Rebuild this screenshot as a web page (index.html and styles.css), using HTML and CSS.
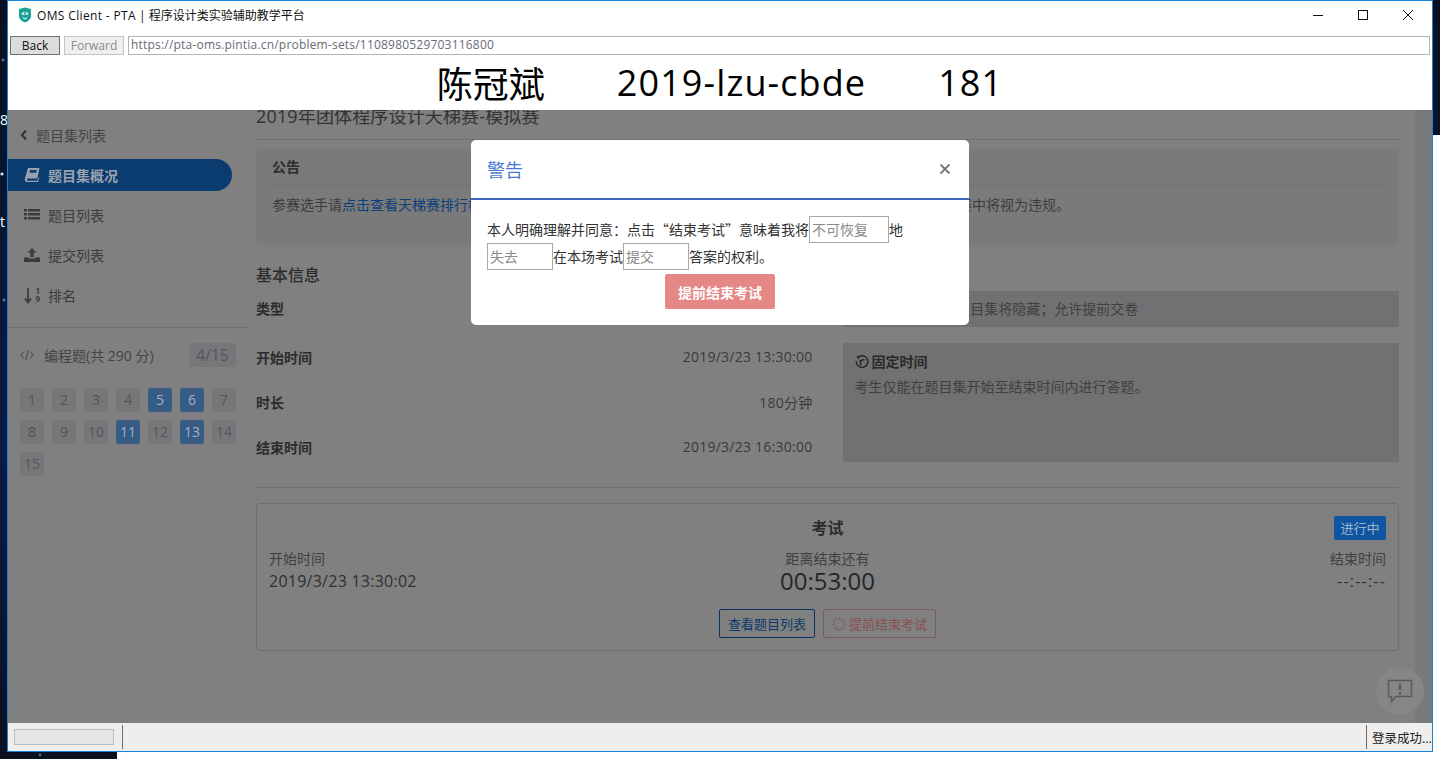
FILE: index.html
```html
<!DOCTYPE html>
<html lang="zh-CN">
<head>
  <meta charset="UTF-8" />
  <title>OMS Client - PTA</title>
  <link rel="stylesheet" href="styles.css">
</head>
<body>

  <!-- desktop behind the client window -->
  <div class="other-window"></div>
  <span class="desk-glyph desk-8">8</span>
  <span class="desk-glyph desk-t">t</span>

  <div class="window">

    <div class="titlebar">
      <svg class="app-icon" width="14" height="16" viewBox="0 0 14 16">
        <path d="M1 2 L7 0.5 L13 2 V9 C13 12 10 14.5 7 15.5 C4 14.5 1 12 1 9 Z" fill="#1aa396"/>
        <path d="M3.5 6.5 C5 4.5 9 4.5 10.5 6.5 C9 8.5 5 8.5 3.5 6.5 Z" fill="#fff"/>
        <circle cx="7" cy="6.5" r="1.2" fill="#1aa396"/>
        <path d="M5 10.5 L7 12 L9 10.5" fill="none" stroke="#fff" stroke-width="1"/>
      </svg>
      <span class="app-title"><span class="app-latin">OMS Client - PTA</span> | 程序设计类实验辅助教学平台</span>
      <div class="win-controls">
        <svg width="12" height="12" viewBox="0 0 12 12"><path d="M1 6.5 H11" stroke="#111" stroke-width="1"/></svg>
        <svg width="12" height="12" viewBox="0 0 12 12"><rect x="1.5" y="1.5" width="9" height="9" fill="none" stroke="#111" stroke-width="1"/></svg>
        <svg width="12" height="12" viewBox="0 0 12 12"><path d="M1 1 L11 11 M11 1 L1 11" stroke="#111" stroke-width="1"/></svg>
      </div>
    </div>

    <div class="navbar">
      <button class="nav-btn">Back</button>
      <button class="nav-btn off">Forward</button>
      <div class="url">https://pta-oms.pintia.cn/problem-sets/1108980529703116800</div>
    </div>

    <div class="candidate">
      <span>陈冠斌</span>
      <span class="candidate-id">2019-lzu-cbde</span>
      <span class="candidate-id">181</span>
    </div>

    <div class="viewport">
      <aside class="sidebar">
        <div class="back-link">
          <svg width="8" height="12" viewBox="0 0 8 12"><path d="M6 1.5 L2 6 L6 10.5" fill="none" stroke="#333" stroke-width="2"/></svg>
          题目集列表
        </div>
        <ul class="side-nav">
          <li class="side-item active">
            <svg width="16" height="16" viewBox="0 0 16 16"><path d="M4 1 H15.5 L13.3 11.5 H4 C2.6 11.5 2.6 13.8 4 13.8 H13.5 L14.4 10.5 L15.3 10.5 L14 15 H3 C0.8 15 0.5 13 1 11 Z" fill="#9aa3ad"/><path d="M6 3 H12.8 L12.3 5.8 H5.5 Z" fill="#0b3c70"/></svg>
            题目集概况
          </li>
          <li class="side-item">
            <svg width="16" height="14" viewBox="0 0 16 14"><path d="M0 1 H3 V3.5 H0 Z M4 1 H16 V3.5 H4 Z M0 5 H3 V7.5 H0 Z M4 5 H16 V7.5 H4 Z M0 9 H3 V11.5 H0 Z M4 9 H16 V11.5 H4 Z" fill="#3c3c3c"/></svg>
            题目列表
          </li>
          <li class="side-item">
            <svg width="16" height="14" viewBox="0 0 16 14"><path d="M8 0 L12.5 4.5 H9.7 V9 H6.3 V4.5 H3.5 Z" fill="#3c3c3c"/><path d="M0 9.5 H5 V10.5 H11 V9.5 H16 V14 H0 Z" fill="#3c3c3c"/></svg>
            提交列表
          </li>
          <li class="side-item">
            <span class="sort-icon">
              <svg width="8" height="17" viewBox="0 0 8 17"><path d="M4 1 V15 M1 11.5 L4 15.5 L7 11.5" fill="none" stroke="#3c3c3c" stroke-width="1.8"/></svg>
              <span class="sort-digits"><span>1</span><span>9</span></span>
            </span>
            排名
          </li>
        </ul>
        <div class="section-head">
          <svg width="14" height="12" viewBox="0 0 14 12"><path d="M4 2.5 L0.8 6 L4 9.5 M10 2.5 L13.2 6 L10 9.5 M8.3 1 L5.7 11" fill="none" stroke="#444" stroke-width="1"/></svg>
          <span class="section-name">编程题(共 290 分)</span>
          <span class="section-count">4/15</span>
        </div>
        <div class="problem-grid">
          <span class="tile">1</span><span class="tile">2</span><span class="tile">3</span><span class="tile">4</span><span class="tile done">5</span><span class="tile done">6</span><span class="tile">7</span>
          <span class="tile">8</span><span class="tile">9</span><span class="tile">10</span><span class="tile done">11</span><span class="tile">12</span><span class="tile done">13</span><span class="tile">14</span>
          <span class="tile">15</span>
        </div>
      </aside>

      <main class="main">
        <h1 class="set-title">2019年团体程序设计天梯赛-模拟赛</h1>

        <section class="notice">
          <div class="notice-head">公告</div>
          <p class="notice-body">参赛选手请<a class="link">点击查看天梯赛排行榜</a>，考生须独立完成全部题目，不得与他人交流或使用其他设备，切勿代考，比赛中将视为违规。</p>
        </section>

        <h2 class="info-title">基本信息</h2>
        <div class="info-grid">
          <div class="info-rows">
            <div class="info-row first"><b>类型</b><span>考试</span></div>
            <div class="info-row"><b>开始时间</b><span class="num">2019/3/23 13:30:00</span></div>
            <div class="info-row"><b>时长</b><span class="num">180分钟</span></div>
            <div class="info-row"><b>结束时间</b><span class="num">2019/3/23 16:30:00</span></div>
          </div>
          <div class="info-notes">
            <div class="note short">考试未开始时， 题目集将隐藏；允许提前交卷</div>
            <div class="note tall">
              <div class="note-head">
                <svg width="14" height="14" viewBox="0 0 14 14"><path d="M3.5 2 A5.8 5.8 0 1 1 1.3 6" fill="none" stroke="#222" stroke-width="1.3"/><path d="M1 1.5 L4.6 1 L4 4.6 Z" fill="#222"/><path d="M5.5 10.5 V5 M5.5 6.5 C6.5 5 8 4.5 9.5 5" fill="none" stroke="#222" stroke-width="1.5"/></svg>
                固定时间
              </div>
              <p>考生仅能在题目集开始至结束时间内进行答题。</p>
            </div>
          </div>
        </div>

        <hr class="rule">

        <section class="exam">
          <div class="exam-grid">
            <div></div>
            <div class="exam-name">考试</div>
            <div class="exam-badge-cell"><span class="exam-badge">进行中</span></div>
            <div class="exam-col">
              <div class="exam-label">开始时间</div>
              <div class="exam-value num">2019/3/23 13:30:02</div>
            </div>
            <div class="exam-col mid">
              <div class="exam-label">距离结束还有</div>
              <div class="exam-clock">00:53:00</div>
            </div>
            <div class="exam-col end">
              <div class="exam-label">结束时间</div>
              <div class="exam-value blank-time">--:--:--</div>
            </div>
          </div>
          <div class="exam-actions">
            <button class="exam-btn primary">查看题目列表</button>
            <button class="exam-btn danger">
              <svg width="14" height="14" viewBox="0 0 14 14"><circle cx="7" cy="7" r="5.5" fill="none" stroke="#8a5050" stroke-width="1.6" stroke-dasharray="1.6 1.5"/></svg>
              提前结束考试
            </button>
          </div>
        </section>
      </main>

      <div class="scroll-track"></div>

      <div class="feedback">
        <svg width="26" height="26" viewBox="0 0 26 26"><path d="M1.5 2.5 H24.5 V18.5 H9 L4.5 23.5 V18.5 H1.5 Z" fill="none" stroke="#5a5a5a" stroke-width="1.5"/><path d="M13 5.5 V12 M13 14 V16.5" stroke="#5a5a5a" stroke-width="2.4"/></svg>
      </div>

      <div class="modal">
        <div class="modal-head">
          <span class="modal-title">警告</span>
          <svg class="modal-close" width="12" height="12" viewBox="0 0 12 12"><path d="M1.5 1.5 L10.5 10.5 M10.5 1.5 L1.5 10.5" stroke="#777" stroke-width="1.8"/></svg>
        </div>
        <div class="modal-body">
          <div class="modal-text">本人明确理解并同意：点击“结束考试”意味着我将<input class="blank wide" placeholder="不可恢复">地<input class="blank" placeholder="失去">在本场考试<input class="blank" placeholder="提交">答案的权利。</div>
          <button class="confirm-btn">提前结束考试</button>
        </div>
      </div>
    </div>

    <div class="statusbar">
      <div class="progress"></div>
      <div class="status-mid"></div>
      <div class="status-text">登录成功...</div>
    </div>
  </div>

</body>
</html>
```

FILE: styles.css
```css
* {
  box-sizing: border-box;
}
html, body {
  margin: 0;
  height: 759px;
  overflow: hidden;
}
body {
  position: relative;
  font-family: "Open Sans", "Noto Sans CJK SC", sans-serif;
  font-size: 14px;
  color: #2c2c2c;
  background-color: #060c1c;
  background-image:
    radial-gradient(circle at 2px 174px, #d8dde8 0, #d8dde8 1px, transparent 2px),
    radial-gradient(circle at 3px 60px, #8b98b5 0, transparent 2px),
    radial-gradient(circle at 4px 300px, #9aa7c2 0, transparent 2px),
    radial-gradient(circle at 40px 755px, #7f8ba8 0, transparent 2px),
    linear-gradient(#08101f, #0a1b45 60%, #0a1020);
}
p, h1, h2, ul {
  margin: 0;
  padding: 0;
}
ul {
  list-style: none;
}

/* desktop bits */
.other-window {
  position: absolute;
  left: 117px;
  right: 0;
  top: 135px;
  bottom: 0;
  background: #fff;
}
.desk-glyph {
  position: absolute;
  color: #fff;
  font-size: 14px;
  line-height: 16px;
}
.desk-8 { left: 0; top: 112px; }
.desk-t { left: 0; top: 214px; }

.window {
  position: relative;
  width: 1426px;
  height: 752px;
  margin-left: 7px;
  border: 1px solid #1783d8;
  background: #fff;
  display: flex;
  flex-direction: column;
}

/* title bar */
.titlebar {
  height: 32px;
  flex: none;
  display: flex;
  align-items: center;
  padding: 0 0 5px 10px;
}
.app-icon {
  margin-right: 5px;
}
.app-title {
  font-size: 12px;
  color: #111;
}
.app-latin {
  letter-spacing: 0.35px;
}
.win-controls {
  margin-left: auto;
  display: flex;
  gap: 33px;
  padding-right: 18px;
}

/* address row */
.navbar {
  height: 22px;
  flex: none;
  display: flex;
  gap: 4px;
  padding: 3px 2px 0 2px;
}
.nav-btn {
  width: 50px;
  height: 19px;
  padding: 0;
  font: 12px "Open Sans", sans-serif;
  background: #dcdcdc;
  border: 1px solid #707070;
  color: #111;
}
.nav-btn.off {
  width: 60px;
  background: #efefef;
  border-color: #c4c4c4;
  color: #8a8a8a;
}
.url {
  flex: 1;
  height: 19px;
  border: 1px solid #b4b4b4;
  padding-left: 2px;
  font-size: 12px;
  line-height: 16px;
  letter-spacing: 0.2px;
  color: #6a6a78;
}

.candidate {
  height: 55px;
  flex: none;
  display: flex;
  justify-content: center;
  align-items: center;
  gap: 72px;
  font-size: 36px;
  color: #000;
}
.candidate-id {
  letter-spacing: 1.1px;
}

/* dimmed page */
.viewport {
  position: relative;
  flex: 1;
  min-height: 0;
  display: flex;
  overflow: hidden;
  background: #808080;
}

.sidebar {
  width: 240px;
  flex: none;
  color: #3c3c3c;
}
.back-link {
  height: 32px;
  margin-top: 9px;
  padding-left: 12px;
  display: flex;
  align-items: center;
  gap: 8px;
  color: #444;
}
.side-nav {
  margin-top: 8px;
  display: flex;
  flex-direction: column;
  gap: 8px;
  padding-bottom: 16px;
  border-bottom: 1px solid #6f6f6f;
}
.side-item {
  width: 224px;
  height: 32px;
  padding-left: 16px;
  display: flex;
  align-items: center;
  gap: 8px;
}
.side-item.active {
  background: #0b3c70;
  color: #9aa3ad;
  font-weight: 700;
  border-radius: 0 16px 16px 0;
}
.sort-icon {
  width: 16px;
  display: flex;
  align-items: center;
  justify-content: space-between;
}
.sort-digits {
  display: flex;
  flex-direction: column;
  font-size: 8px;
  font-weight: 700;
  line-height: 8.5px;
}
.section-head {
  margin-top: 15px;
  height: 24px;
  padding: 0 12px;
  display: flex;
  align-items: center;
  color: #444;
}
.section-name {
  margin-left: 10px;
}
.section-count {
  margin-left: auto;
  width: 47px;
  height: 24px;
  line-height: 24px;
  text-align: center;
  font-size: 15.5px;
  background: #777779;
  color: #4f5560;
  border-radius: 2px;
}
.problem-grid {
  margin-top: 21px;
  padding-left: 12px;
  display: grid;
  grid-template-columns: repeat(7, 24px);
  gap: 8px;
}
.tile {
  height: 24px;
  line-height: 24px;
  text-align: center;
  background: #777779;
  color: #4f5560;
  border-radius: 2px;
}
.tile.done {
  background: #355c85;
  color: #a4b2c0;
}

.main {
  flex: 1;
  min-width: 0;
  padding-left: 8px;
  margin-right: 16px;
}
.set-title {
  margin-top: -6px;
  height: 36px;
  padding-bottom: 10px;
  font-size: 18px;
  font-weight: 400;
  line-height: 24px;
  letter-spacing: 0.15px;
  border-bottom: 1px solid #6f6f6f;
  color: #333;
}
.notice {
  margin-top: 8px;
  height: 97px;
  padding: 0 16px;
  background: #7a7a7a;
  border-radius: 4px;
}
.notice-head {
  height: 38px;
  line-height: 38px;
  font-weight: 700;
  color: #2c2c2c;
  border-bottom: 1px solid #707070;
}
.notice-body {
  padding-top: 9px;
  line-height: 20px;
  white-space: nowrap;
  color: #3c3c3c;
}
.link {
  color: #0d3f78;
}
.info-title {
  margin-top: 19px;
  font-size: 16px;
  font-weight: 500;
  line-height: 22px;
  color: #2c2c2c;
}
.info-grid {
  margin-top: 5px;
  display: grid;
  grid-template-columns: 1fr 1fr;
  gap: 30px;
}
.info-row {
  height: 45px;
  display: flex;
  justify-content: space-between;
  align-items: center;
  color: #3a3a3a;
}
.info-row.first {
  height: 34px;
  margin-bottom: 9px;
}
.info-row b {
  color: #2c2c2c;
}
.num {
  letter-spacing: 0.25px;
}
.info-notes {
  display: flex;
  flex-direction: column;
  gap: 16px;
}
.note {
  padding: 0 12px;
  background: #707173;
  border-radius: 2px;
  color: #404040;
}
.note.short {
  height: 36px;
  line-height: 36px;
}
.note.tall {
  height: 119px;
  padding-top: 9px;
}
.note-head {
  display: flex;
  align-items: center;
  gap: 3px;
  line-height: 20px;
  font-weight: 700;
  color: #2a2a2a;
}
.note.tall p {
  margin-top: 5px;
  line-height: 20px;
}
.rule {
  margin: 18px 0 15px;
  border: 0;
  border-top: 1px solid #6f6f6f;
}

.exam {
  height: 148px;
  padding: 12px;
  border: 1px solid #6f6f6f;
  border-radius: 4px;
}
.exam-grid {
  display: grid;
  grid-template-columns: 1fr auto 1fr;
}
.exam-name {
  font-size: 16px;
  font-weight: 700;
  line-height: 24px;
  text-align: center;
  color: #2c2c2c;
}
.exam-badge-cell {
  text-align: right;
  height: 33px;
}
.exam-badge {
  display: inline-block;
  width: 52px;
  height: 24px;
  line-height: 24px;
  text-align: center;
  font-size: 13px;
  background: #0f55a0;
  color: #9db4cc;
  border-radius: 2px;
}
.exam-label {
  line-height: 20px;
  color: #404040;
}
.exam-value {
  font-size: 16px;
  line-height: 24px;
  color: #303030;
}
.blank-time {
  letter-spacing: 1.2px;
}
.exam-clock {
  font-size: 24px;
  line-height: 24px;
  color: #262626;
}
.exam-col.mid {
  text-align: center;
}
.exam-col.end {
  text-align: right;
}
.exam-actions {
  margin-top: 16px;
  display: flex;
  justify-content: center;
  gap: 8px;
}
.exam-btn {
  height: 29px;
  padding: 0 8px;
  font: 13px "Open Sans", "Noto Sans CJK SC", sans-serif;
  background: transparent;
  border-radius: 2px;
  display: flex;
  align-items: center;
  gap: 3px;
}
.exam-btn.primary {
  border: 1px solid #0a3360;
  color: #0e3a6a;
}
.exam-btn.danger {
  border: 1px solid #7d5a5a;
  color: #8a5050;
}

.scroll-track {
  width: 17px;
  flex: none;
  background: #77797b;
}

.feedback {
  position: absolute;
  left: 1368px;
  top: 557px;
  width: 48px;
  height: 48px;
  border-radius: 50%;
  background: #868686;
  display: flex;
  align-items: center;
  justify-content: center;
}

/* modal */
.modal {
  position: absolute;
  left: 463px;
  top: 30px;
  width: 498px;
  height: 185px;
  background: #fff;
  border-radius: 5px;
  font-family: "Noto Sans CJK SC", sans-serif;
}
.modal-head {
  height: 60px;
  padding: 0 18px 0 16px;
  border-bottom: 2px solid #3f68c4;
  display: flex;
  align-items: center;
  justify-content: space-between;
}
.modal-title {
  font-size: 18px;
  color: #4a78d6;
}
.modal-body {
  padding: 16px;
  text-align: center;
}
.modal-text {
  line-height: 27px;
  text-align: left;
  color: #333;
}
.blank {
  width: 66px;
  height: 27px;
  padding: 0 2px 2px;
  vertical-align: top;
  font: 14px "Noto Sans CJK SC", sans-serif;
  border: 1px solid #a9a9a9;
  border-radius: 0;
  outline: none;
}
.blank.wide {
  width: 80px;
}
.blank::placeholder {
  color: #8a8a8a;
  opacity: 1;
}
.confirm-btn {
  width: 110px;
  height: 35px;
  margin-top: 4px;
  padding: 0;
  border: 0;
  border-radius: 2px;
  background: #e58785;
  color: #fff;
  font: 700 14px "Noto Sans CJK SC", sans-serif;
}

/* status strip */
.statusbar {
  height: 28px;
  flex: none;
  display: flex;
  align-items: center;
  background: #f0eeed;
}
.progress {
  width: 100px;
  height: 16px;
  margin-left: 6px;
  background: #e6e6e6;
  border: 1px solid #bcbcbc;
}
.status-mid {
  flex: 1;
  height: 24px;
  margin-left: 8px;
  border-left: 1px solid #6e6e6e;
  border-right: 1px solid #6e6e6e;
}
.status-text {
  width: 65px;
  padding-left: 5px;
  font-size: 12.5px;
  color: #222;
  white-space: nowrap;
}
```
